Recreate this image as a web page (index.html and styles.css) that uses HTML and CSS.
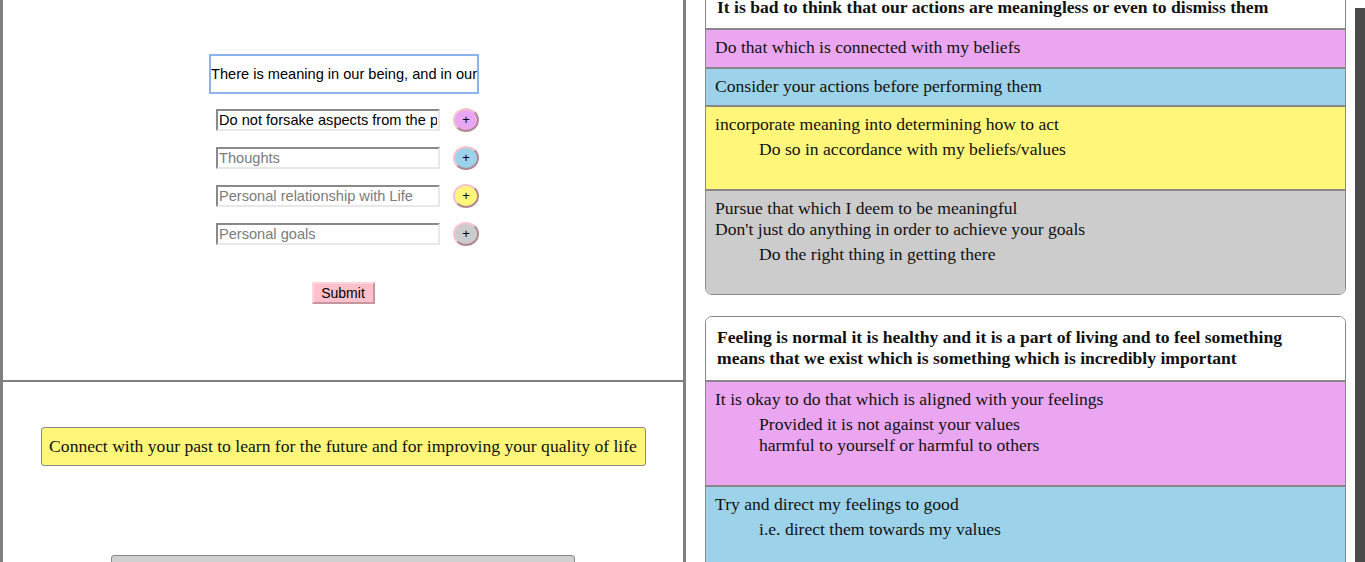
FILE: index.html
```html
<!DOCTYPE html>
<html>
<head>
<meta charset="utf-8">
<link rel="stylesheet" href="styles.css">
</head>
<body>
<div class="left">
  <section class="form-area">
    <input class="main-input" type="text" value="There is meaning in our being, and in our lives">
    <div class="row">
      <input class="field" type="text" value="Do not forsake aspects from the past">
      <button class="plus pink">+</button>
    </div>
    <div class="row">
      <input class="field" type="text" placeholder="Thoughts">
      <button class="plus blue">+</button>
    </div>
    <div class="row">
      <input class="field" type="text" placeholder="Personal relationship with Life">
      <button class="plus yellow">+</button>
    </div>
    <div class="row">
      <input class="field" type="text" placeholder="Personal goals">
      <button class="plus gray">+</button>
    </div>
    <button class="submit">Submit</button>
  </section>
  <section class="quote-area">
    <div class="quote">Connect with your past to learn for the future and for improving your quality of life</div>
    <div class="gray-bar"></div>
  </section>
</div>

<div class="cards">
  <div class="card first">
    <div class="card-head">It is bad to think that our actions are meaningless or even to dismiss them</div>
    <div class="item pink">Do that which is connected with my beliefs</div>
    <div class="item blue">Consider your actions before performing them</div>
    <div class="item yellow">
      <div>incorporate meaning into determining how to act</div>
      <div class="sub">Do so in accordance with my beliefs/values</div>
    </div>
    <div class="item gray">
      <div>Pursue that which I deem to be meaningful</div>
      <div>Don't just do anything in order to achieve your goals</div>
      <div class="sub">Do the right thing in getting there</div>
    </div>
  </div>
  <div class="card">
    <div class="card-head">Feeling is normal it is healthy and it is a part of living and to feel something means that we exist which is something which is incredibly important</div>
    <div class="item pink">
      <div>It is okay to do that which is aligned with your feelings</div>
      <div class="sub">Provided it is not against your values<br>harmful to yourself or harmful to others</div>
    </div>
    <div class="item blue">
      <div>Try and direct my feelings to good</div>
      <div class="sub">i.e. direct them towards my values</div>
    </div>
  </div>
</div>

<div class="side-bar"></div>
</body>
</html>
```

FILE: styles.css
```css
html, body {
  margin: 0;
  padding: 0;
  height: 562px;
  overflow: hidden;
  background: #ffffff;
}

body {
  display: flex;
  align-items: flex-start;
  font-family: "Liberation Serif", "Times New Roman", serif;
  color: #111;
}

.left {
  width: 680px;
  flex: none;
  height: 900px;
  border-left: 3px solid #808080;
  border-right: 3px solid #808080;
  display: flex;
  flex-direction: column;
}

.form-area {
  height: 382px;
  box-sizing: border-box;
  border-bottom: 2px solid #808080;
  display: flex;
  flex-direction: column;
  align-items: center;
  padding-top: 54px;
}

.main-input {
  width: 270px;
  height: 40px;
  box-sizing: border-box;
  border: 2px solid #8db3ee;
  outline: none;
  padding: 0;
  margin: 0 0 14px 2px;
  font-family: "Liberation Sans", Arial, sans-serif;
  font-size: 14.6px;
  color: #000;
  background: #fff;
}

.row {
  display: flex;
  align-items: center;
  gap: 13px;
  margin-bottom: 14px;
  padding-left: 9px;
}

.field {
  width: 224px;
  height: 22px;
  box-sizing: border-box;
  border: 2px solid;
  border-color: #8a8a8a #e8e8e8 #e8e8e8 #8a8a8a;
  padding: 0 1px;
  margin: 0;
  font-family: "Liberation Sans", Arial, sans-serif;
  font-size: 14.6px;
  color: #000;
  background: #fff;
  outline: none;
}

.field::placeholder {
  color: #7b7b7b;
}

.plus {
  width: 26px;
  height: 24px;
  box-sizing: border-box;
  border-radius: 50%;
  border: 2px solid;
  border-color: #f6c4cf #b08a93 #b08a93 #f6c4cf;
  padding: 0;
  margin: 0;
  font-family: "Liberation Sans", Arial, sans-serif;
  font-size: 13px;
  line-height: 18px;
  color: #000;
}

.pink { background: #eaa6f0; }
.blue { background: #9dd3ea; }
.yellow { background: #fff67a; }
.gray { background: #cccccc; }

.submit {
  margin-top: 22px;
  width: 63px;
  height: 22px;
  box-sizing: border-box;
  background: #ffc0cb;
  border: 2px solid;
  border-color: #fbd6dd #c497a0 #c497a0 #fbd6dd;
  padding: 0;
  font-family: "Liberation Sans", Arial, sans-serif;
  font-size: 14px;
  color: #000;
}

.quote-area {
  display: flex;
  flex-direction: column;
  align-items: center;
  padding-top: 45px;
}

.quote {
  box-sizing: border-box;
  width: 605px;
  height: 39px;
  padding: 8px 0 0 0;
  text-align: center;
  background: #fff67a;
  border: 1px solid #888;
  border-radius: 3px;
  font-size: 17.6px;
  line-height: 21px;
  white-space: nowrap;
}

.gray-bar {
  margin-top: 89px;
  width: 464px;
  height: 60px;
  box-sizing: border-box;
  background: #d0d0d0;
  border: 1px solid #888;
  border-radius: 3px;
}

.cards {
  width: 641px;
  flex: none;
  margin-left: 19px;
  margin-top: -11px;
  display: flex;
  flex-direction: column;
  gap: 21px;
}

.card {
  border: 1px solid #8a8a8a;
  border-radius: 7px;
  overflow: hidden;
  background: #fff;
  font-size: 17.6px;
  line-height: 21px;
}

.card-head {
  font-weight: bold;
  padding: 10px 40px 11px 11px;
  background: #fff;
}

.first .card-head {
  line-height: 15px;
  padding-bottom: 13px;
}

.item {
  border-top: 2px solid #888;
  padding: 7px 9px 8px;
}

.first .card-head + .item {
  padding-bottom: 9px;
}

.sub {
  margin: 4px 0 21px 44px;
}

.side-bar {
  flex: none;
  width: 10px;
  height: 560px;
  margin-top: 8px;
  margin-left: 9px;
  background: #4b4b4b;
}
```
